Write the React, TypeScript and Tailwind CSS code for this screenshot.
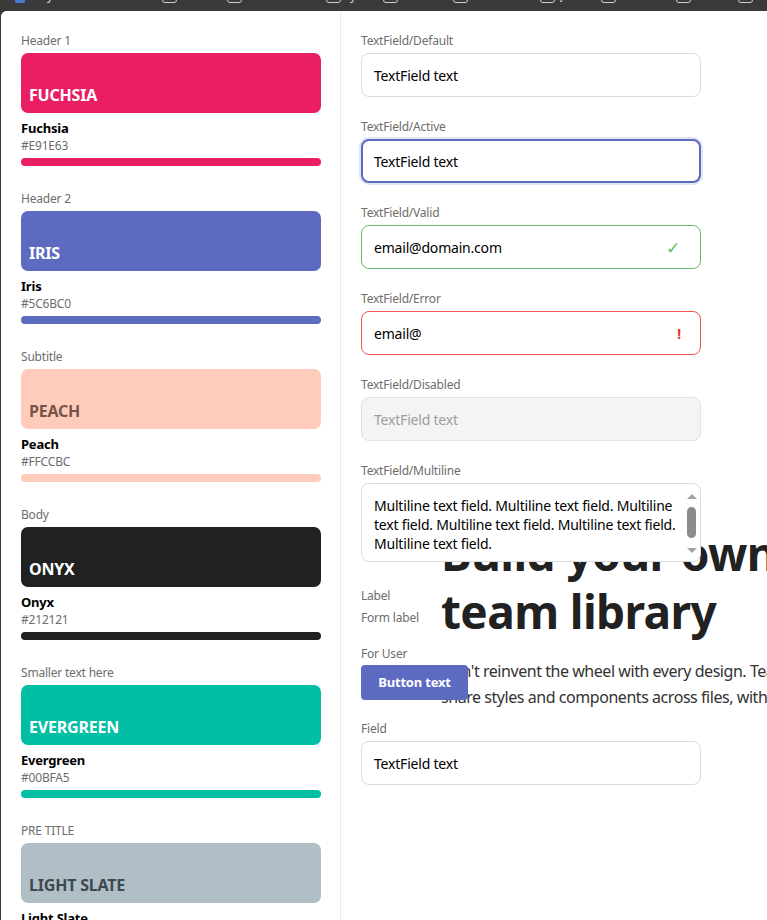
import React from 'react';

type Swatch = {
  label: string;
  name: string;
  hex: string;
  bg: string;
  text: string;
  upper: string;
};

const swatches: Swatch[] = [
  { label: 'Header 1', name: 'Fuchsia', hex: '#E91E63', bg: 'bg-[#E91E63]', text: 'text-white', upper: 'FUCHSIA' },
  { label: 'Header 2', name: 'Iris', hex: '#5C6BC0', bg: 'bg-[#5C6BC0]', text: 'text-white', upper: 'IRIS' },
  { label: 'Subtitle', name: 'Peach', hex: '#FFCCBC', bg: 'bg-[#FFCCBC]', text: 'text-[#795548]', upper: 'PEACH' },
  { label: 'Body', name: 'Onyx', hex: '#212121', bg: 'bg-[#212121]', text: 'text-white', upper: 'ONYX' },
  { label: 'Smaller text here', name: 'Evergreen', hex: '#00BFA5', bg: 'bg-[#00BFA5]', text: 'text-white', upper: 'EVERGREEN' },
  { label: 'PRE TITLE', name: 'Light Slate', hex: '#B0BEC5', bg: 'bg-[#B0BEC5]', text: 'text-[#3d4850]', upper: 'LIGHT SLATE' },
];

function Box({ ml }: { ml: string }) {
  return <div className={`${ml} -mt-[12px] h-[15px] w-[15px] shrink-0 rounded-[3px] border border-[#cfcfcf]`} />;
}

function Frag({ ml, w, t }: { ml: string; w: string; t: string }) {
  return (
    <div className={`${ml} ${w} -mt-[12px] shrink-0 overflow-hidden whitespace-nowrap text-[12px] leading-[15px] text-[#d8d8d8]`}>
      {t}
    </div>
  );
}

function TopBar() {
  return (
    <div className="flex h-[11px] items-start overflow-hidden bg-[#3a3a3a]">
      <div className="-mt-[8px] ml-[15px] h-[11px] w-[10px] shrink-0 rounded-[1px] bg-[#4a78d0]" />
      <div className="-mt-[12px] ml-[22px] shrink-0 text-[12px] leading-[15px] text-[#d8d8d8]">y</div>
      <Box ml="ml-[109px]" />
      <Box ml="ml-[50px]" />
      <Frag ml="ml-[5px]" w="w-[62px]" t="wax secure" />
      <Box ml="ml-[17px]" />
      <Frag ml="ml-[3px]" w="w-[20px]" t="xyz" />
      <Box ml="ml-[19px]" />
      <Box ml="ml-[55px]" />
      <Frag ml="ml-[7px]" w="w-[48px]" t="Pattern" />
      <Box ml="ml-[17px]" />
      <Frag ml="ml-[5px]" w="w-[23px]" t="Jun" />
      <Box ml="ml-[18px]" />
      <Frag ml="ml-[5px]" w="w-[39px]" t="Sizes" />
      <Box ml="ml-[16px]" />
      <Frag ml="ml-[5px]" w="w-[17px]" t="N/A" />
      <Box ml="ml-[25px]" />
    </div>
  );
}

function SwatchBlock({ s }: { s: Swatch }) {
  return (
    <div className="mb-[25px] flex flex-col">
      <div className="h-[16px] text-[12px] leading-[16px] text-[#6d6d6d]">{s.label}</div>
      <div className={`mt-[4px] flex h-[60px] items-end rounded-[7px] px-[8px] pb-[10px] ${s.bg}`}>
        <span className={`text-[16px] font-bold leading-[16px] ${s.text}`}>{s.upper}</span>
      </div>
      <div className="mt-[6px] h-[18px] text-[13px] font-bold leading-[18px] text-black">{s.name}</div>
      <div className="mt-[1px] h-[16px] text-[12px] leading-[16px] text-[#6d6d6d]">{s.hex}</div>
      <div className={`mt-[4px] h-[8px] rounded-full ${s.bg}`} />
    </div>
  );
}

function Label({ children, className = '' }: { children: React.ReactNode; className?: string }) {
  return <div className={`h-[16px] text-[12px] leading-[16px] text-[#6d6d6d] ${className}`}>{children}</div>;
}

function Field({ label, children, mb = 'mb-[22px]' }: { label: string; children: React.ReactNode; mb?: string }) {
  return (
    <div className={`flex flex-col ${mb}`}>
      <Label>{label}</Label>
      <div className="mt-[4px]">{children}</div>
    </div>
  );
}

export default function App() {
  return (
    <div className="relative h-[920px] w-[767px] overflow-hidden bg-[#3a3a3a] font-['Noto_Sans',sans-serif] tracking-[-0.2px]">
      <TopBar />
      <div className="relative ml-[1px] h-[909px] overflow-hidden rounded-tl-[6px] bg-white">
        {/* background marketing text behind the fields */}
        <div className="absolute left-[440px] top-[514px] w-[700px]">
          <div className="text-[46px] font-bold leading-[57.6px] tracking-[-0.6px] text-[#212121]">
            Build your own
            <br />
            team library
          </div>
          <p className="mt-[18px] whitespace-nowrap text-[16px] leading-[26px] tracking-[-0.45px] text-[#333]">
            Don't reinvent the wheel with every design. Team libraries let you
            <br />
            share styles and components across files, with everyone on your team.
          </p>
        </div>

        <div className="relative z-10 flex h-full">
          {/* Left column */}
          <div className="w-[340px] shrink-0 border-r border-[#ececec] bg-white pl-[20px] pr-[19px] pt-[22px]">
            {swatches.map((s) => (
              <SwatchBlock key={s.name} s={s} />
            ))}
          </div>

          {/* Right column */}
          <div className="flex flex-col pl-[20px] pt-[22px]">
            <div className="w-[340px]">
              <Field label="TextField/Default">
                <div className="flex h-[44px] items-center rounded-[8px] border border-[#dcdcdc] bg-white pl-[12px] text-[14px] text-black">
                  TextField text
                </div>
              </Field>
              <Field label="TextField/Active">
                <div className="flex h-[44px] items-center rounded-[8px] border-2 border-[#5C6BC0] bg-white pl-[11px] text-[14px] text-black shadow-[0_0_0_2px_rgba(92,107,192,0.18)]">
                  TextField text
                </div>
              </Field>
              <Field label="TextField/Valid">
                <div className="flex h-[44px] items-center justify-between rounded-[8px] border border-[#66BB6A] bg-white pl-[12px] pr-[20px] text-[14px] text-black">
                  <span>email@domain.com</span>
                  <span className="text-[17px] leading-none text-[#66BB6A]">✓</span>
                </div>
              </Field>
              <Field label="TextField/Error">
                <div className="flex h-[44px] items-center justify-between rounded-[8px] border border-[#EF5350] bg-white pl-[12px] pr-[19px] text-[14px] text-black">
                  <span>email@</span>
                  <span className="text-[15px] font-bold leading-none text-[#E53935]">!</span>
                </div>
              </Field>
              <Field label="TextField/Disabled">
                <div className="flex h-[44px] items-center rounded-[8px] border border-[#e2e2e2] bg-[#f4f4f4] pl-[12px] text-[14px] text-[#9e9e9e]">
                  TextField text
                </div>
              </Field>
              <Field label="TextField/Multiline" mb="mb-[26px]">
                <div className="flex h-[79px] overflow-hidden rounded-[8px] border border-[#dcdcdc] bg-white">
                  <div className="flex-1 pl-[12px] pr-[6px] pt-[12px] text-[14px] leading-[19px] text-black">
                    Multiline text field. Multiline text field. Multiline text field. Multiline text field. Multiline text field. Multiline text field.
                  </div>
                  <div className="flex w-[17px] shrink-0 flex-col items-center pt-[10px]">
                    <div className="h-0 w-0 border-x-[5px] border-b-[5px] border-x-transparent border-b-[#a3a3a3]" />
                    <div className="mt-[8px] h-[31px] w-[9px] rounded-full bg-[#8c8c8c]" />
                    <div className="mt-[10px] h-0 w-0 border-x-[5px] border-t-[5px] border-x-transparent border-t-[#a3a3a3]" />
                  </div>
                </div>
              </Field>

              <Label>Label</Label>
              <Label className="mt-[6px]">Form label</Label>
              <Label className="mt-[20px]">For User</Label>
              <button className="mt-[3px] flex h-[35px] w-[107px] items-center justify-center rounded-[4px] bg-[#5C6BC0] text-[13px] font-bold text-white">
                Button text
              </button>
              <div className="mt-[21px]">
                <Field label="Field">
                  <div className="flex h-[44px] items-center rounded-[8px] border border-[#dcdcdc] bg-white pl-[12px] text-[14px] text-black">
                    TextField text
                  </div>
                </Field>
              </div>
            </div>
          </div>
        </div>
      </div>
    </div>
  );
}
